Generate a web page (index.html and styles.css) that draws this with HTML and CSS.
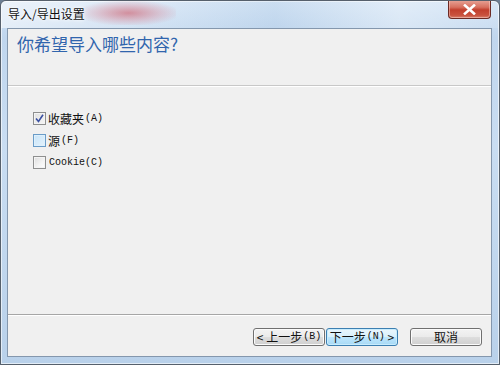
FILE: index.html
```html
<!DOCTYPE html>
<html lang="zh-CN">
<head>
    <meta charset="UTF-8">
    <title>导入/导出设置</title>
    <link rel="stylesheet" href="styles.css">
</head>
<body>
    <div class="window">
        <div class="titlebar">
            <span class="blur"></span>
            <span class="caption">导入/导出设置</span>
            <button class="close" aria-label="关闭">
                <svg width="13" height="11" viewBox="0 0 13 11">
                    <path d="M2 1.5 L11 9.5 M11 1.5 L2 9.5" stroke="#fff" stroke-width="2.6" stroke-linecap="square"/>
                </svg>
            </button>
        </div>
        <div class="client">
            <div class="header">
                <h1>你希望导入哪些内容?</h1>
            </div>
            <div class="options">
                <label class="option">
                    <span class="box checked">
                        <svg width="9" height="9" viewBox="0 0 9 9"><path d="M1 4.5 L3.5 7.5 L8 0.8" fill="none" stroke="#3c52a3" stroke-width="1.6"/></svg>
                    </span>
                    <span>收藏夹</span><span class="latin">(A)</span>
                </label>
                <label class="option">
                    <span class="box hover"></span>
                    <span>源</span><span class="latin">(F)</span>
                </label>
                <label class="option">
                    <span class="box"></span>
                    <span class="latin">Cookie(C)</span>
                </label>
            </div>
            <div class="footer">
                <button class="btn">&lt;&nbsp;上一步<span class="latin">(B)</span></button>
                <button class="btn focus">下一步<span class="latin">(N)</span>&nbsp;&gt;</button>
                <button class="btn cancel">取消</button>
            </div>
        </div>
    </div>
</body>
</html>
```

FILE: styles.css
```css
*{
    margin: 0;
    padding: 0;
    box-sizing: border-box;
}
body{
    width: 500px;
    height: 365px;
    overflow: hidden;
    background: #6d7f94;
    font-family: "Noto Sans CJK SC", sans-serif;
}
.window{
    width: 500px;
    height: 365px;
    display: flex;
    flex-direction: column;
    border: 1px solid #56606c;
    border-radius: 6px 6px 0 0;
    background: linear-gradient(180deg, #d3e4f5 0%, #c0d6ee 10%, #c9ddf2 40%, #b9d1ea 100%);
    box-shadow: inset 0 0 0 1px rgba(255,255,255,0.6);
    overflow: hidden;
}
.titlebar{
    position: relative;
    height: 27px;
    display: flex;
    align-items: flex-start;
    background: linear-gradient(90deg, rgba(255,255,255,0.55) 0%, rgba(255,255,255,0.2) 30%, rgba(160,190,220,0.15) 55%, rgba(255,255,255,0.35) 80%, rgba(255,255,255,0.1) 100%);
}
/* blurred stuff behind the glass */
.titlebar .blur{
    position: absolute;
    left: 80px;
    top: 0;
    width: 95px;
    height: 24px;
    background: radial-gradient(ellipse at center, rgba(205,85,100,0.6) 0%, rgba(215,130,145,0.35) 45%, rgba(210,160,170,0) 78%);
}
.caption{
    position: relative;
    margin: 5px 0 0 7px;
    font-size: 12px;
    line-height: 16px;
    color: #111;
    text-shadow: 0 0 6px #fff, 0 0 3px #fff;
}
.close{
    position: relative;
    margin: -1px 8px 0 auto;
    width: 43px;
    height: 19px;
    border: 1px solid #6b2a24;
    border-top: none;
    border-radius: 0 0 4px 4px;
    background: linear-gradient(180deg, #e8a598 0%, #d7705f 40%, #c23f2d 55%, #c9523e 85%, #d9826f 100%);
    box-shadow: inset 0 0 0 1px rgba(255,220,210,0.45);
    display: flex;
    align-items: center;
    justify-content: center;
}
.client{
    flex: 1;
    margin: 0 7px 7px 6px;
    display: flex;
    flex-direction: column;
    background: #f0f0f0;
    border: 1px solid #8497ad;
}
.header{
    height: 57px;
    padding: 3px 0 0 9px;
    border-bottom: 1px solid #c8c8c8;
    box-shadow: 0 1px 0 #fff;
}
.header h1{
    font-weight: normal;
    font-size: 17px;
    line-height: 24px;
    color: #3065ad;
}
.options{
    flex: 1;
    padding: 21px 0 0 25px;
    display: flex;
    flex-direction: column;
}
.option{
    height: 22px;
    display: flex;
    align-items: center;
    font-size: 12px;
    color: #111;
}
.latin{
    font-family: "Liberation Mono", monospace;
    font-size: 10px;
    margin-left: 1px;
}
.box{
    width: 13px;
    height: 13px;
    margin-right: 2px;
    border: 1px solid #8e8f8f;
    background: linear-gradient(135deg, #dcdcdc 0%, #f4f4f4 60%, #fff 100%);
    box-shadow: inset 0 0 0 1px #f4f4f4;
    display: flex;
    align-items: center;
    justify-content: center;
}
.box.checked{
    background: linear-gradient(135deg, #e0e0e0 0%, #f6f6f6 100%);
}
.box.hover{
    border-color: #6a9cc8;
    background: linear-gradient(135deg, #c8e4f8 0%, #e4f2fc 100%);
    box-shadow: inset 0 0 0 1px #def0fc;
}
.footer{
    height: 42px;
    padding: 13px 9px 0 0;
    border-top: 1px solid #a6a6a6;
    box-shadow: inset 0 1px 0 #fff;
    display: flex;
    align-items: flex-start;
    justify-content: flex-end;
}
.btn{
    width: 72px;
    height: 18px;
    font-family: "Noto Sans CJK SC", sans-serif;
    font-size: 12px;
    line-height: 14px;
    color: #111;
    border: 1px solid #707070;
    border-radius: 3px;
    background: linear-gradient(180deg, #f3f3f3 0%, #ebebeb 48%, #dddddd 52%, #cfcfcf 100%);
    box-shadow: inset 0 0 0 1px #fbfbfb;
    display: flex;
    align-items: center;
    justify-content: center;
}
.btn + .btn{
    margin-left: 1px;
}
.btn.focus{
    border-color: #3c7fb1;
    background: linear-gradient(180deg, #eaf6fd 0%, #d9f0fc 48%, #bee6fd 52%, #a7d9f5 100%);
    box-shadow: inset 0 0 0 1px #c8ecfd;
}
.btn.cancel{
    margin-left: 12px;
}
```
